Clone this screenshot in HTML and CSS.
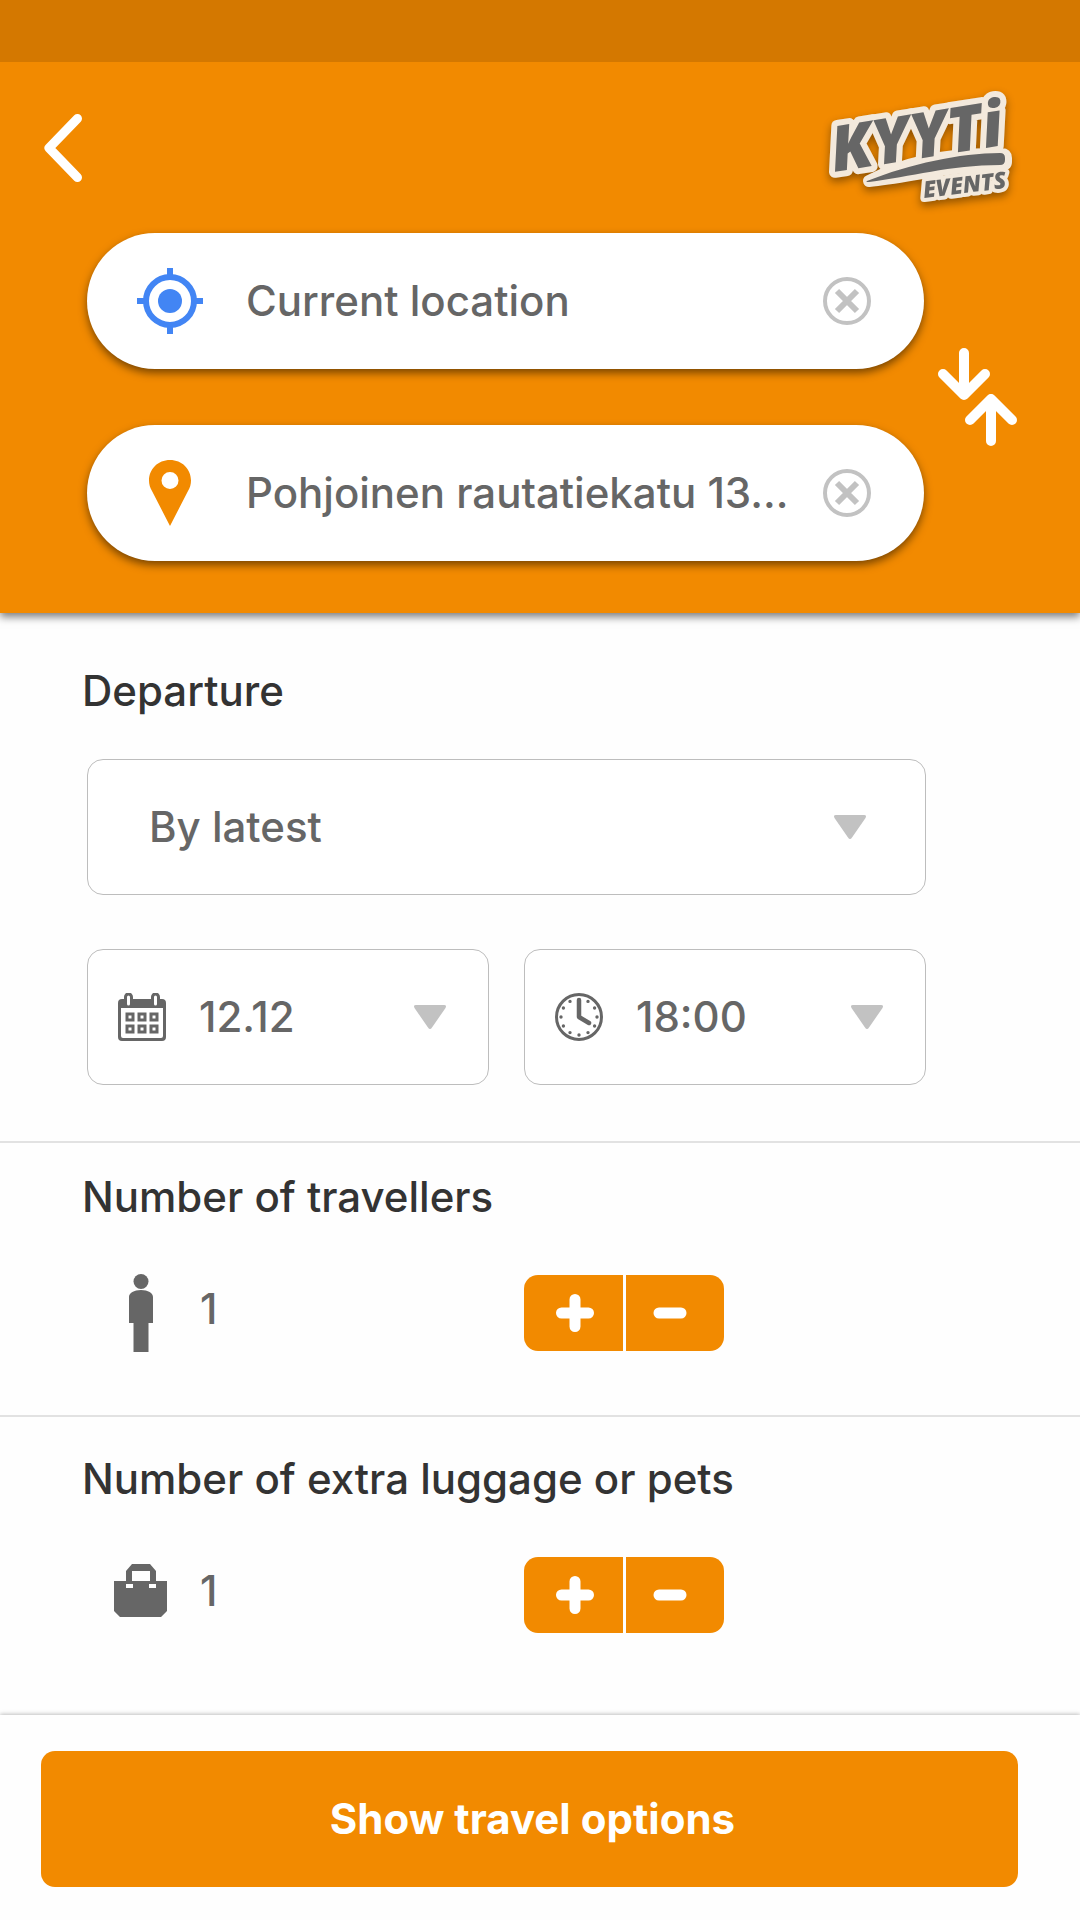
FILE: index.html
```html
<!DOCTYPE html>
<html lang="en">
<head>
  <meta charset="utf-8">
  <meta name="viewport" content="width=device-width, initial-scale=1">
  <title>Kyyti Events</title>
  <link rel="stylesheet" href="styles.css">
</head>
<body>
  <header class="header">
    <div class="status-bar"></div>
    <div class="top-bar">
      <button class="icon-button" type="button" aria-label="Back">
        <svg width="38" height="68" viewBox="0 0 38 68" fill="none" stroke="#fff" stroke-width="9" stroke-linecap="round" stroke-linejoin="round"><path d="M33.500 4.500 5 34l28.500 29.500"/></svg>
      </button>
      <svg class="logo" width="210" height="130" viewBox="820 80 210 130" role="img" aria-label="Kyyti Events">
        <path class="logo-outline" d="M869 178C910 156 960 150 1002 151q4 0 4 4v4q0 3-4 3C950 162 910 174 869 178Z"/>
        <text class="logo-name" x="834" y="169" transform="rotate(-9 834 169)">KYYTi</text>
        <text class="logo-sub" x="924" y="195" transform="rotate(-7 924 195)">EVENTS</text>
        <path class="logo-fill" d="M867 178C910 161 960 150 1000 150q5 0 5 5v2q0 5-5 5C950 162 910 174 869 179q-4 0-2-1Z"/>
      </svg>
    </div>
    <div class="route">
      <div class="route-fields">
        <div class="pill">
          <svg width="66" height="66" viewBox="0 0 66 66" fill="none" stroke="#4285f4" stroke-width="6"><circle cx="33" cy="33" r="24"/><circle cx="33" cy="33" r="12" fill="#4285f4" stroke="none"/><path d="M33 0v8M33 58v8M0 33h8M58 33h8"/></svg>
          <input class="pill-input" type="text" aria-label="From" value="Current location">
          <button class="icon-button" type="button" aria-label="Clear origin">
            <svg width="48" height="48" viewBox="0 0 48 48" fill="none" stroke="#c2c2c2"><circle cx="24" cy="24" r="22" stroke-width="4"/><path d="m14 14 20 20M34 14 14 34" stroke-width="6"/></svg>
          </button>
        </div>
        <div class="pill">
          <svg width="66" height="66" viewBox="0 0 66 66" fill="#f28a00"><path fill-rule="evenodd" d="M33 0c12 0 21 9 21 20.500 0 4-1 7-3 10.500L33 66 15 31c-2-3.500-3-6.500-3-10.500C12 9 21 0 33 0Zm0 12a8.500 8.500 0 1 0 0 17 8.500 8.500 0 0 0 0-17Z"/></svg>
          <input class="pill-input" type="text" aria-label="To" value="Pohjoinen rautatiekatu 13...">
          <button class="icon-button" type="button" aria-label="Clear destination">
            <svg width="48" height="48" viewBox="0 0 48 48" fill="none" stroke="#c2c2c2"><circle cx="24" cy="24" r="22" stroke-width="4"/><path d="m14 14 20 20M34 14 14 34" stroke-width="6"/></svg>
          </button>
        </div>
      </div>
      <button class="icon-button" type="button" aria-label="Swap origin and destination">
        <svg width="82" height="98" viewBox="0 0 82 98" fill="none" stroke="#fff" stroke-width="10" stroke-linecap="round" stroke-linejoin="round"><path d="M27 5v42M6 26l21 21 21-21M54 93V51M33 72l21-21 21 21"/></svg>
      </button>
    </div>
  </header>

  <main class="main">
    <section class="section departure">
      <h2 class="title">Departure</h2>
      <div class="section-body">
        <div class="field">
          <select class="field-select" aria-label="Departure"><option>By latest</option></select>
          <svg class="field-arrow arrow-wide" width="34" height="26" viewBox="0 0 34 26" fill="#c2c2c2"><path d="M3 1h28q3 0 1.500 3L19 23.500q-2 3-4 0L1.500 4Q0 1 3 1Z"/></svg>
        </div>
        <div class="pair">
          <div class="field">
            <svg class="field-icon" width="48" height="48" viewBox="0 0 48 48" fill="#666"><path fill-rule="evenodd" d="M4 6h2V4a4 4 0 0 1 9 0v2h18V4a4 4 0 0 1 9 0v2h2a4 4 0 0 1 4 4v34a4 4 0 0 1-4 4H4a4 4 0 0 1-4-4V10a4 4 0 0 1 4-4Zm-1 9v28q0 2 2 2h38q2 0 2-2V15ZM9 4v7q0 1.500 1.500 1.500T12 11V4q0-1.500-1.500-1.500T9 4Zm27 0v7q0 1.500 1.500 1.500T39 11V4q0-1.500-1.500-1.500T36 4Z"/><path fill="none" stroke="#666" stroke-width="3" d="M9 21h6v6H9zM21 21h6v6h-6zM33 21h6v6h-6zM9 33h6v6H9zM21 33h6v6h-6zM33 33h6v6h-6z"/></svg>
            <select class="field-select with-icon" aria-label="Date"><option>12.12</option></select>
            <svg class="field-arrow" width="34" height="26" viewBox="0 0 34 26" fill="#c2c2c2"><path d="M3 1h28q3 0 1.500 3L19 23.500q-2 3-4 0L1.500 4Q0 1 3 1Z"/></svg>
          </div>
          <div class="field">
            <svg class="field-icon" width="48" height="48" viewBox="0 0 48 48" fill="none" stroke="#666" stroke-linecap="round" stroke-linejoin="round"><circle cx="24" cy="24" r="22.500" stroke-width="3"/><path stroke-width="4.500" d="M24 7v17l10 6"/><path stroke-width="3.400" d="M33 8.400h0M39.600 15h0M42 24h0M39.600 33h0M33 39.600h0M24 42h0M15 39.600h0M8.400 33h0M6 24h0M8.400 15h0M15 8.400h0"/></svg>
            <select class="field-select with-icon" aria-label="Time"><option>18:00</option></select>
            <svg class="field-arrow" width="34" height="26" viewBox="0 0 34 26" fill="#c2c2c2"><path d="M3 1h28q3 0 1.500 3L19 23.500q-2 3-4 0L1.500 4Q0 1 3 1Z"/></svg>
          </div>
        </div>
      </div>
    </section>

    <section class="section travellers">
      <h2 class="title" id="travellers-title">Number of travellers</h2>
      <div class="section-body pair">
        <div class="count">
          <svg width="54" height="78" viewBox="0 0 54 78" fill="#666"><circle cx="27" cy="7.500" r="7.500"/><path d="M15 49V23c0-4 5-7 12-7s12 3 12 7v26h-4.500v29h-15V49Z"/></svg>
          <output class="count-value" aria-labelledby="travellers-title">1</output>
        </div>
        <div class="stepper">
          <button class="step" type="button" aria-label="Add traveller">
            <svg width="40" height="40" viewBox="0 0 40 40" stroke="#fff" stroke-width="11" stroke-linecap="round"><path d="M20 6.500v27M6.500 20h27"/></svg>
          </button>
          <button class="step" type="button" aria-label="Remove traveller">
            <svg width="40" height="40" viewBox="0 0 40 40" stroke="#fff" stroke-width="11" stroke-linecap="round"><path d="M9 20h22"/></svg>
          </button>
        </div>
      </div>
    </section>

    <section class="section luggage">
      <h2 class="title" id="luggage-title">Number of extra luggage or pets</h2>
      <div class="section-body pair">
        <div class="count">
          <svg width="54" height="62" viewBox="0 0 54 62" fill="#666"><path fill-rule="evenodd" d="M0 17h12V7l6-7h18l6 7v10h11v30l-6 6H6l-6-6ZM18 7v10h18V7ZM12 20v4h7v-4Zm23 0v4h7v-4Z"/></svg>
          <output class="count-value" aria-labelledby="luggage-title">1</output>
        </div>
        <div class="stepper">
          <button class="step" type="button" aria-label="Add luggage">
            <svg width="40" height="40" viewBox="0 0 40 40" stroke="#fff" stroke-width="11" stroke-linecap="round"><path d="M20 6.500v27M6.500 20h27"/></svg>
          </button>
          <button class="step" type="button" aria-label="Remove luggage">
            <svg width="40" height="40" viewBox="0 0 40 40" stroke="#fff" stroke-width="11" stroke-linecap="round"><path d="M9 20h22"/></svg>
          </button>
        </div>
      </div>
    </section>
  </main>

  <footer class="footer">
    <button class="submit" type="button">Show travel options</button>
  </footer>
</body>
</html>
```
FILE: styles.css
```css
* {
  box-sizing: border-box;
}

body {
  margin: 0;
  min-height: 100vh;
  display: flex;
  flex-direction: column;
  background: #fefefe;
  color: #666;
  font: 500 42px/48px Inter, "Liberation Sans", sans-serif;
}

svg {
  display: block;
  flex: none;
}

button,
input,
select {
  margin: 0;
  padding: 0;
  border: 0;
  background: none;
  color: inherit;
  font: inherit;
}

.icon-button {
  flex: none;
  cursor: pointer;
}

/* Header */
.header {
  position: relative;
  padding-bottom: 52px;
  background: #f28a00;
  box-shadow: 0 4px 8px rgba(0, 0, 0, 0.5);
}

.status-bar {
  height: 62px;
  background: #d47800;
}

.top-bar {
  display: flex;
  align-items: center;
  justify-content: space-between;
  height: 171px;
  padding: 0 50px 0 44px;
}

.logo {
  overflow: visible;
  filter: drop-shadow(0 4px 4px rgba(0, 0, 0, 0.4));
}

.logo-outline {
  fill: #f3e9dc;
  stroke: #f3e9dc;
  stroke-width: 12px;
  stroke-linejoin: round;
}

.logo-fill {
  fill: #666;
}

.logo-name,
.logo-sub {
  fill: #666;
  stroke: #f3e9dc;
  stroke-width: 12px;
  stroke-linejoin: round;
  paint-order: stroke;
}

.logo-name {
  font: italic 800 63px "Open Sans", sans-serif;
}

.logo-sub {
  stroke-width: 8px;
  font: italic 800 23px "Open Sans", sans-serif;
}

.route {
  display: flex;
  align-items: center;
  gap: 13px;
  padding: 0 61px 0 87px;
}

.route-fields {
  flex: 1;
  min-width: 0;
  display: grid;
  gap: 56px;
}

.pill {
  display: flex;
  align-items: center;
  min-width: 0;
  height: 136px;
  padding: 0 53px 0 50px;
  border-radius: 68px;
  background: #fff;
  box-shadow: 0 4px 8px rgba(0, 0, 0, 0.5);
}

.pill-input {
  flex: 1;
  min-width: 0;
  margin: 0 14px 0 43px;
}

/* Sections */
.main {
  flex: 1;
}

.section + .section {
  border-top: 2px solid #e2e2e2;
}

.departure {
  padding: 54px 0 56px;
}

.travellers {
  padding: 30px 0 64px;
}

.luggage {
  padding: 38px 0 82px;
}

.title {
  margin: 0;
  padding: 0 82px;
  color: #333;
  font-size: 42px;
  font-weight: 500;
}

.section-body {
  padding: 0 154px 0 87px;
}

.departure .section-body {
  display: grid;
  gap: 54px;
  margin-top: 44px;
}

.section-body.pair {
  margin-top: 54px;
}

.pair {
  display: grid;
  grid-template-columns: 1fr 1fr;
  align-items: center;
  gap: 35px;
}

.field {
  display: grid;
  align-items: center;
  height: 136px;
  border: 1px solid #bdbdbd;
  border-radius: 16px;
  background: #fff;
}

.field > * {
  grid-area: 1 / 1;
}

.field-select {
  width: 100%;
  height: 100%;
  padding-left: 61px;
  border-radius: 16px;
  appearance: none;
}

.field-select.with-icon {
  padding-left: 111px;
}

.field-icon {
  justify-self: start;
  margin-left: 30px;
  pointer-events: none;
}

.field-arrow {
  justify-self: end;
  margin-right: 41px;
  pointer-events: none;
}

.arrow-wide {
  margin-right: 58px;
}

/* Counters */
.count {
  display: flex;
  align-items: center;
  gap: 32px;
  height: 76px;
  padding-left: 27px;
}

.count-value {
  padding-bottom: 8px;
}

.stepper {
  display: grid;
  grid-template-columns: 1fr 1fr;
  gap: 3px;
  width: 200px;
  height: 76px;
  border-radius: 14px;
  overflow: hidden;
}

.step {
  display: grid;
  place-items: center;
  padding-left: 4px;
  background: #f28a00;
  cursor: pointer;
}

.step:last-child {
  padding: 0 10px 0 0;
}

/* Footer */
.footer {
  padding: 36px 62px 33px 41px;
  background: #fefefe;
  box-shadow: 0 -1px 4px rgba(0, 0, 0, 0.25);
}

.submit {
  display: block;
  width: 100%;
  height: 136px;
  padding-left: 6px;
  border-radius: 14px;
  background: #f28a00;
  color: #fff;
  font-weight: 700;
  cursor: pointer;
}
```
